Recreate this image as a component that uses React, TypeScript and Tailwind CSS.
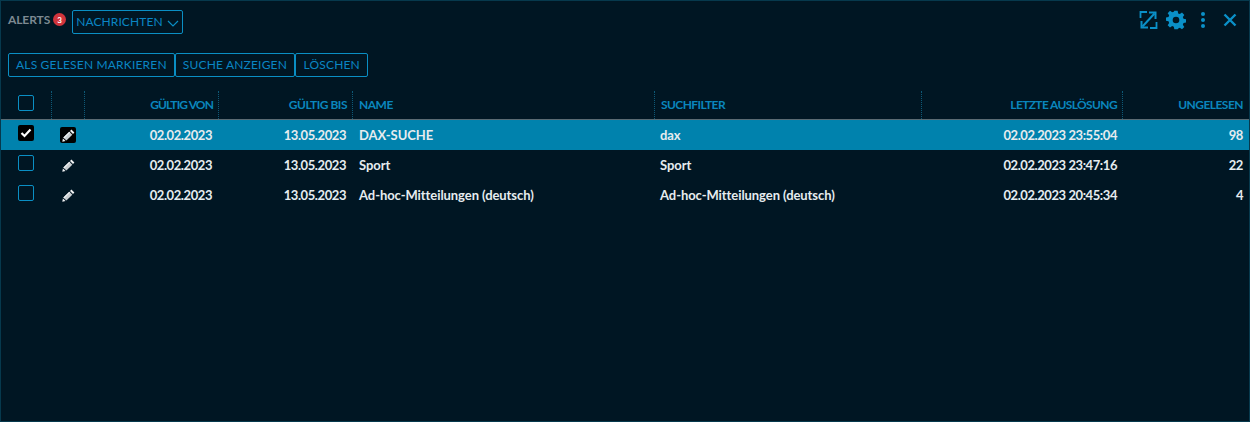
import React from "react";

const rows = [
  { von: "02.02.2023", bis: "13.05.2023", name: "DAX-SUCHE", filter: "dax", last: "02.02.2023 23:55:04", n: "98", sel: true },
  { von: "02.02.2023", bis: "13.05.2023", name: "Sport", filter: "Sport", last: "02.02.2023 23:47:16", n: "22", sel: false },
  { von: "02.02.2023", bis: "13.05.2023", name: "Ad-hoc-Mitteilungen (deutsch)", filter: "Ad-hoc-Mitteilungen (deutsch)", last: "02.02.2023 20:45:34", n: "4", sel: false },
];

const grid = "grid grid-cols-[51px_33px_134px_134px_302px_267px_201px_126px]";
const sep = "border-r border-dotted border-[#0e5a78]";
const hcell = "flex items-center h-[28px] text-[12px] font-bold text-[#0a86bd]";
const btn = "h-[24px] px-[7px] border border-[#0a8fc4] rounded-[2px] text-[12px] tracking-[0.18px] text-[#0a86c4] flex items-center";
const num = "text-right pr-[7px] tracking-[-0.42px] pt-[1px]";

function Pencil() {
  return (
    <svg width="13" height="13" viewBox="0 0 13 13">
      <path d="M9.4 0.6 L12.4 3.6 L11 5 L8 2 Z" fill="#f2f4f5" />
      <path d="M7.3 2.7 L10.3 5.7 L4.4 11.6 L1.4 8.6 Z" fill="#c9ced1" />
      <path d="M7.3 2.7 L8.1 3.5 L2.2 9.4 L1.4 8.6 Z" fill="#f2f4f5" />
      <path d="M0.9 9.4 L3.6 12.1 L0.3 12.7 Z" fill="#f2f4f5" />
    </svg>
  );
}

export default function App() {
  return (
    <div className="w-[1250px] h-[422px] bg-[#001623] border border-[#06394d] font-['Lato','Noto_Sans',sans-serif] overflow-hidden flex flex-col">
      <div className="flex items-start justify-between pt-[9px] pl-[7px] pr-[10px] h-[52px]">
        <div className="flex items-start">
          <span className="text-[12px] font-bold tracking-[-0.1px] text-[#7d8a92] mt-[1px] leading-[18px]">ALERTS</span>
          <span className="ml-[3px] mt-[3px] w-[13px] h-[13px] rounded-full bg-[#d0343c] text-white text-[8px] font-bold flex items-center justify-center">3</span>
          <div className="ml-[6px] h-[24px] px-[3px] border border-[#0a8fc4] rounded-[2px] flex items-center text-[12px] tracking-[0.1px] text-[#0a86c4]">
            NACHRICHTEN
            <svg width="12" height="7" viewBox="0 0 12 7" fill="none" stroke="#0a8fc4" strokeWidth="1.2" className="ml-[4px] mt-[2px]"><path d="M1 1 L6 6 L11 1" /></svg>
          </div>
        </div>
        <div className="flex items-center text-[#0a90c8] mr-[2px]">
          <svg width="19" height="20" viewBox="0 0 19 20" fill="none" stroke="#0a90c8" strokeWidth="2">
            <path d="M8 2 H1.5 V8 M11 18 H17.5 V12" strokeWidth="1.8" />
            <path d="M15.5 3.5 L3.5 16.5" />
            <path d="M10 2.5 H16.5 V9 M9 17.5 H2.5 V11" />
          </svg>
          <svg width="20" height="20" viewBox="0 0 24 24" fill="#0a90c8" className="ml-[8px]">
            <path fillRule="evenodd" d="M10 1h4l.6 3.1 2 .8 2.6-1.8 2.8 2.8-1.8 2.6.8 2 3 .6v4l-3 .6-.8 2 1.8 2.6-2.8 2.8-2.6-1.8-2 .8L14 23h-4l-.6-3-2-.8-2.6 1.8L2 18.2 3.8 15.6l-.8-2-3-.6v-4l3-.6.8-2L2 3.8 4.8 1l2.6 1.8 2-.8L10 1zm2 7a4 4 0 1 0 0 8 4 4 0 0 0 0-8z" />
          </svg>
          <svg width="6" height="18" viewBox="0 0 6 18" fill="#0a90c8" className="ml-[14px]"><circle cx="3" cy="3" r="2" /><circle cx="3" cy="9" r="2" /><circle cx="3" cy="15" r="2" /></svg>
          <svg width="14" height="14" viewBox="0 0 14 14" fill="none" stroke="#0a90c8" strokeWidth="2.4" className="ml-[17px]"><path d="M1.5 1.5 L12.5 12.5 M12.5 1.5 L1.5 12.5" /></svg>
        </div>
      </div>

      <div className="flex pl-[7px]">
        <button className={btn}>ALS GELESEN MARKIEREN</button>
        <button className={btn}>SUCHE ANZEIGEN</button>
        <button className={`${btn} !px-[7.5px]`}>LÖSCHEN</button>
      </div>

      <div className="mt-[14px]">
        <div className={`${grid} h-[28px] border-b border-[#5a6a72] box-content`}>
          <div className={`${hcell} ${sep} pl-[17px]`}><span className="w-[16px] h-[16px] mb-[4px] border border-[#0a8fc4] rounded-[2px]" /></div>
          <div className={`${hcell} ${sep}`} />
          <div className={`${hcell} ${sep} justify-end pr-[5px] tracking-[-0.9px]`}>GÜLTIG VON</div>
          <div className={`${hcell} ${sep} justify-end pr-[5px] tracking-[-0.5px]`}>GÜLTIG BIS</div>
          <div className={`${hcell} ${sep} pl-[6px] tracking-[-0.5px]`}>NAME</div>
          <div className={`${hcell} ${sep} pl-[6px] tracking-[-0.6px]`}>SUCHFILTER</div>
          <div className={`${hcell} ${sep} justify-end pr-[5px] tracking-[-0.64px]`}>LETZTE AUSLÖSUNG</div>
          <div className={`${hcell} justify-end pr-[6px] tracking-[-0.53px]`}>UNGELESEN</div>
        </div>
        {rows.map((r, i) => (
          <div key={i} className={`${grid} h-[30px] items-center text-[13px] font-bold tracking-[-0.07px] text-[#e6ecef] ${r.sel ? "bg-[#0082ad]" : ""}`}>
            <div className="pl-[17px] flex mb-[4px]">
              {r.sel ? (
                <span className="w-[16px] h-[16px] bg-black rounded-[2px] flex items-center justify-center">
                  <svg width="12" height="10" viewBox="0 0 12 10" fill="none" stroke="#fff" strokeWidth="2.2"><path d="M1.5 5 L4.5 8 L10.5 1.5" /></svg>
                </span>
              ) : (
                <span className="w-[16px] h-[16px] border border-[#0a8fc4] rounded-[2px]" />
              )}
            </div>
            <div className="flex justify-center pr-[1px]">
              {r.sel ? (
                <span className="w-[16px] h-[16px] bg-black rounded-[2px] flex items-center justify-center"><Pencil /></span>
              ) : (
                <Pencil />
              )}
            </div>
            <div className={num}>{r.von}</div>
            <div className={num}>{r.bis}</div>
            <div className="pl-[6px] pt-[1px]">{r.name}</div>
            <div className="pl-[5px] pt-[1px]">{r.filter}</div>
            <div className={`${num} !pr-[6px]`}>{r.last}</div>
            <div className={`${num} !pr-[6px]`}>{r.n}</div>
          </div>
        ))}
      </div>
    </div>
  );
}
